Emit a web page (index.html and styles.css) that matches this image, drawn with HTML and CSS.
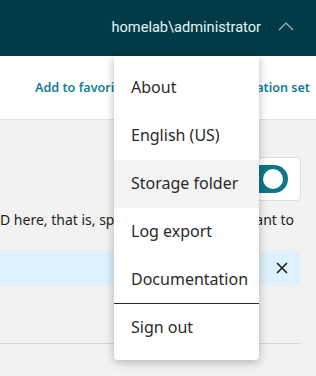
FILE: index.html
```html
<!DOCTYPE html>
<html>
<head>
    <title>Settings</title>
    <link rel="stylesheet" href="styles.css">
</head>
<body>
    <div id="header">
        <span class="user">homelab\administrator</span>
        <svg class="chevron" width="16" height="10" viewBox="0 0 16 10">
            <path d="M1 9 L8 2 L15 9" fill="none" stroke="#9fbcc1" stroke-width="1.2"/>
        </svg>
    </div>

    <div id="toolbar">
        <a class="tool-link">Add to favorites</a>
        <a class="tool-link">Add to configuration set</a>
    </div>

    <div id="content">
        <div class="toggle-row">
            <div class="toggle-card">
                <div class="toggle"><span class="knob"></span></div>
            </div>
        </div>
        <p class="desc">D here, that is, specify the folder you want to</p>
        <div class="banner">
            <svg class="close" width="12" height="12" viewBox="0 0 12 12">
                <path d="M1 1 L11 11 M11 1 L1 11" stroke="#1f1f1f" stroke-width="1.6"/>
            </svg>
        </div>
        <div class="rule"></div>
    </div>

    <div id="menu">
        <div class="item">About</div>
        <div class="item">English (US)</div>
        <div class="item hover">Storage folder</div>
        <div class="item">Log export</div>
        <div class="item">Documentation</div>
        <div class="divider"></div>
        <div class="item">Sign out</div>
    </div>
</body>
</html>
```

FILE: styles.css
```css
body {
    margin: 0;
    padding: 0;
    width: 316px;
    height: 376px;
    overflow: hidden;
    background-color: #f2f2f2;
    font-family: "Noto Sans", sans-serif;
    position: relative;
}

#header {
    height: 56px;
    background-color: #023a47;
    display: flex;
    justify-content: flex-end;
    align-items: center;
    padding-right: 22px;
}

#header .user {
    font-family: Roboto, sans-serif;
    font-size: 14.6px;
    color: #e4f6f6;
    margin-right: 17px;
    margin-top: -3px;
}

#header .chevron {
    margin-top: -4px;
}

#toolbar {
    height: 63px;
    background-color: #fff;
    border-bottom: 1px solid #e2e2e2;
    display: flex;
    align-items: center;
    justify-content: space-between;
    padding: 0 6px 0 35px;
    white-space: nowrap;
    overflow: hidden;
}

.tool-link {
    font-size: 12.6px;
    font-weight: 600;
    color: #137f92;
    margin-top: -1px;
}

#content {
    padding-top: 37px;
    overflow: hidden;
}

.toggle-row {
    display: flex;
    justify-content: flex-end;
    padding-right: 15px;
}

.toggle-card {
    width: 70px;
    height: 44px;
    background-color: #fff;
    border: 1px solid #e0e0e0;
    border-radius: 4px;
    display: flex;
    align-items: center;
    justify-content: flex-end;
    padding-right: 12px;
    box-sizing: border-box;
}

.toggle {
    width: 50px;
    height: 28px;
    border-radius: 14px;
    background-color: #0d7688;
    display: flex;
    align-items: center;
    justify-content: flex-end;
    padding-right: 5px;
    box-sizing: border-box;
}

.knob {
    width: 20px;
    height: 20px;
    border-radius: 50%;
    background-color: #fff;
}

.desc {
    margin: 10px 0 0 0;
    font-size: 14px;
    color: #222;
    white-space: nowrap;
    line-height: 18px;
}

.banner {
    margin-top: 22px;
    width: 300px;
    height: 34px;
    background-color: #dff1fc;
    border-radius: 0 4px 4px 0;
    display: flex;
    align-items: center;
    justify-content: flex-end;
    padding-right: 12px;
    box-sizing: border-box;
}

.rule {
    margin-top: 58px;
    width: 300px;
    height: 1px;
    background-color: #d6d6d6;
}

#menu {
    position: absolute;
    top: 56px;
    left: 114px;
    width: 145px;
    padding: 8px 0;
    background-color: #fff;
    border-radius: 0 0 4px 4px;
    box-shadow: 0 2px 10px rgba(0, 0, 0, 0.28);
}

#menu .item {
    height: 48px;
    line-height: 46px;
    padding-left: 17px;
    font-size: 16px;
    color: #2a2a2a;
    white-space: nowrap;
}

#menu .item.hover {
    background-color: #f3f3f3;
}

#menu .divider {
    height: 1px;
    background-color: #2a2a2a;
    margin-top: -1px;
}
```
